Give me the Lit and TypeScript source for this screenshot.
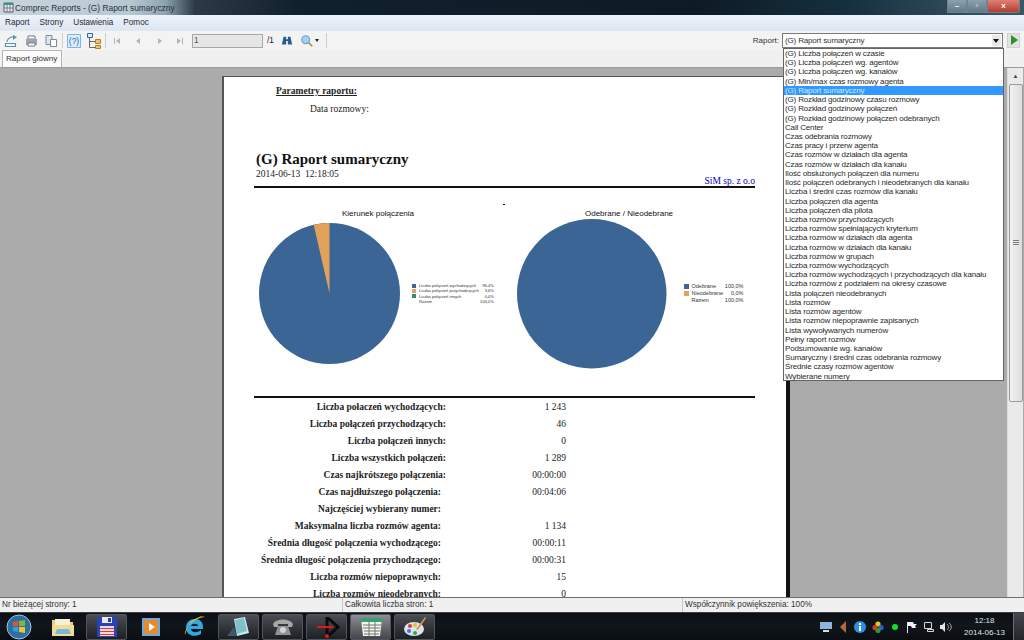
import { LitElement, html, css, svg } from 'lit';
import { customElement } from 'lit/decorators.js';

const reports = [
  '(G) Liczba połączeń w czasie',
  '(G) Liczba połączeń wg. agentów',
  '(G) Liczba połączeń wg. kanałów',
  '(G) Min/max czas rozmowy agenta',
  '(G) Raport sumaryczny',
  '(G) Rozkład godzinowy czasu rozmowy',
  '(G) Rozkład godzinowy połączeń',
  '(G) Rozkład godzinowy połączeń odebranych',
  'Call Center',
  'Czas odebrania rozmowy',
  'Czas pracy i przerw agenta',
  'Czas rozmów w działach dla agenta',
  'Czas rozmów w działach dla kanału',
  'Ilość obsłużonych połączeń dla numeru',
  'Ilość połączeń odebranych i nieodebranych dla kanału',
  'Liczba i średni czas rozmów dla kanału',
  'Liczba połączeń dla agenta',
  'Liczba połączeń dla pilota',
  'Liczba rozmów przychodzących',
  'Liczba rozmów spełniających kryterium',
  'Liczba rozmów w działach dla agenta',
  'Liczba rozmów w działach dla kanału',
  'Liczba rozmów w grupach',
  'Liczba rozmów wychodzących',
  'Liczba rozmów wychodzących i przychodzących dla kanału',
  'Liczba rozmów z podziałem na okresy czasowe',
  'Lista połączeń nieodebranych',
  'Lista rozmów',
  'Lista rozmów agentów',
  'Lista rozmów niepoprawnie zapisanych',
  'Lista wywoływanych numerów',
  'Pełny raport rozmów',
  'Podsumowanie wg. kanałów',
  'Sumaryczny i średni czas odebrania rozmowy',
  'Średnie czasy rozmów agentów',
  'Wybierane numery',
];

// [label, value, right edge offset of the label]
const stats: [string, string, number][] = [
  ['Liczba połaczeń wychodzących:', '1 243', 0],
  ['Liczba połączeń przychodzących:', '46', 0],
  ['Liczba połączeń innych:', '0', 0],
  ['Liczba wszystkich połączeń:', '1 289', 0],
  ['Czas najkrótszego połączenia:', '00:00:00', 0],
  ['Czas najdłuższego połączenia:', '00:04:06', 5],
  ['Najczęściej wybierany numer:', '', 5],
  ['Maksymalna liczba rozmów agenta:', '1 134', 5],
  ['Średnia długość połączenia wychodzącego:', '00:00:11', 5],
  ['Średnia długość połączenia przychodzącego:', '00:00:31', 5],
  ['Liczba rozmów niepoprawnych:', '15', 5],
  ['Liczba rozmów nieodebranych:', '0', 5],
];

const legendA: [string, string, string][] = [
  ['#3a6595', 'Liczba połączeń wychodzących', '96,4%'],
  ['#e3a25a', 'Liczba połączeń przychodzących', '3,6%'],
  ['#2f8f7f', 'Liczba połączeń innych', '0,0%'],
  ['', 'Razem', '100,0%'],
];

const legendB: [string, string, string][] = [
  ['#3a6595', 'Odebrane', '100,0%'],
  ['#e3a25a', 'Nieodebrane', '0,0%'],
  ['', 'Razem', '100,0%'],
];

const navIcon = (d: string) => html`<svg class="ico" width="16" height="16" viewBox="0 0 16 16">
  <path d=${d} fill="#b0b6bc"></path>
</svg>`;

const trayIcons = [
  svg`<path d="M0 1h12v7H0z" fill="#8fb4dc"></path><path d="M3 9h6v2H3z" fill="#d8dde2"></path>`,
  svg`<path d="M9 0v12L3 6z" fill="#b9653c"></path>`,
  svg`<circle cx="6" cy="6" r="6" fill="#2f8fe0"></circle><path d="M5 5h2v5H5zM5 2h2v2H5z" fill="#fff"></path>`,
  svg`<circle cx="6" cy="3" r="2.6" fill="#e8c820"></circle><circle cx="3" cy="6.5" r="2.6" fill="#d83a2a"></circle><circle cx="9" cy="6.5" r="2.6" fill="#2a62c8"></circle><circle cx="6" cy="9.5" r="2.6" fill="#2a9a3a"></circle>`,
  svg`<circle cx="6" cy="6" r="3" fill="#12e02a"></circle>`,
  svg`<path d="M1 1h1v11H1z" fill="#e8e8e8"></path><path d="M2 1h5l1 2h3l-2 2 1 2H6L5 5H2z" fill="#f2f2f2"></path>`,
  svg`<path d="M1.5 1.5h7v6h-7zM4.5 8.5h6v2h-6z" fill="none" stroke="#d6d6d6"></path>`,
  svg`<path d="M0 4h2l3-3v10L2 8H0z" fill="#e4e4e4"></path><path d="M7 3c2 2 2 4 0 6M9 2c3 2 3 6 0 8" fill="none" stroke="#a8a8a8"></path>`,
];

@customElement('app-root')
export class AppRoot extends LitElement {
  static styles = css`
    :host {
      display: block;
      position: relative;
      width: 1024px;
      height: 640px;
      overflow: hidden;
      font-family: 'Liberation Sans', Arial, sans-serif;
      font-size: 8.2px;
      color: #1a1a1a;
      background: #f0f0f0;
    }
    .shell {
      display: flex;
      flex-direction: column;
      height: 640px;
    }
    .title {
      height: 15px;
      flex: none;
      display: flex;
      align-items: center;
      gap: 1px;
      padding-left: 3px;
      box-sizing: border-box;
      font-size: 8.4px;
      color: #26323c;
      background: linear-gradient(90deg, #c9d4dc 0, #b8c8d3 130px, #8ea3b1 165px, #2b3a46 195px, #10202c 300px, #0d1b26 700px, #16303f 850px, #3a5564 1000px);
      position: relative;
    }
    .winbtns {
      position: absolute;
      right: 4px;
      top: 0;
      display: flex;
      height: 13px;
    }
    .winbtns div {
      height: 13px;
      box-sizing: border-box;
      border: 1px solid #6d8391;
      border-top: none;
      text-align: center;
      line-height: 11px;
      font-size: 8px;
      font-weight: bold;
      color: #fff;
    }
    .min, .max {
      width: 20px;
      background: linear-gradient(#8aa1ae, #61798a);
    }
    .close {
      width: 33px;
      background: linear-gradient(#dd8073, #b33f30);
      border-radius: 0 0 3px 0;
    }
    .menu {
      height: 15px;
      flex: none;
      display: flex;
      align-items: center;
      gap: 10px;
      padding-left: 5px;
      font-size: 8.2px;
      color: #2a2a2a;
      background: linear-gradient(#eef3fa, #dde6f2);
    }
    .toolbar {
      height: 20px;
      flex: none;
      display: flex;
      align-items: center;
      padding-left: 3px;
      box-sizing: border-box;
      background: #f3f3f3;
      border-top: 1px solid #e4e8ee;
    }
    .ico {
      display: block;
      flex: none;
    }
    .tb-gap {
      width: 4px;
      flex: none;
    }
    .tb-gap.wide {
      width: 7px;
    }
    .sep {
      width: 1px;
      height: 15px;
      background: #d0d0d0;
      margin: 0 3px;
      flex: none;
    }
    .sep.last {
      margin-left: 6px;
    }
    .nav {
      display: flex;
      gap: 5px;
      margin: 0 2px 0 0;
    }
    .pagebox {
      width: 71px;
      height: 14px;
      box-sizing: border-box;
      border: 1px solid #a8a8a8;
      background: #e6e6e6;
      padding-left: 1px;
      line-height: 12px;
      font-size: 8.2px;
      color: #555;
      flex: none;
      margin-left: 2px;
    }
    .of {
      margin: 0 7px 0 4px;
      color: #222;
    }
    .spacer {
      flex: 1;
    }
    .rep-label {
      margin-right: 3px;
      color: #333;
      font-size: 8px;
    }
    .combo {
      width: 221px;
      height: 15px;
      box-sizing: border-box;
      border: 1px solid #7a7a7a;
      background: #fff;
      padding-left: 2px;
      line-height: 13px;
      font-size: 8px;
      letter-spacing: -0.16px;
      color: #333;
      position: relative;
      flex: none;
    }
    .combo i {
      position: absolute;
      right: 1px;
      top: 1px;
      width: 9px;
      height: 11px;
      background: #e8e8e8;
    }
    .combo i::after {
      content: '';
      position: absolute;
      left: 1px;
      top: 4px;
      border: 3px solid transparent;
      border-top: 4px solid #111;
      border-bottom: none;
    }
    .go {
      width: 13px;
      height: 15px;
      margin: 0 4px 0 4px;
      box-sizing: border-box;
      border: 1px solid #cfcfcf;
      background: #e2e2e2;
      position: relative;
      flex: none;
    }
    .go::after {
      content: '';
      position: absolute;
      left: 3px;
      top: 1px;
      border: 5px solid transparent;
      border-left: 7px solid #2f8f2f;
      border-right: none;
    }
    .tabs {
      height: 18px;
      flex: none;
      box-sizing: border-box;
      background: #f0f0f0;
      border-bottom: 1px solid #9a9a9a;
      padding: 0 0 0 2px;
      display: flex;
    }
    .tab {
      height: 17px;
      box-sizing: border-box;
      padding: 0 4px 0 3px;
      line-height: 15px;
      font-size: 8px;
      border: 1px solid #b5b5b5;
      border-bottom: none;
      background: #fbfbfb;
      color: #333;
    }
    .viewer {
      flex: 1;
      min-height: 0;
      display: flex;
      background: #ababab;
      border-bottom: 1px solid #6f6f6f;
    }
    .scroller {
      flex: 1;
      overflow: hidden;
      padding: 8px 0 0 222px;
    }
    .scrollbar {
      width: 16px;
      margin-right: 1px;
      flex: none;
      background: #eaeaea;
      border-left: 1px solid #dcdcdc;
      box-sizing: border-box;
      display: flex;
      flex-direction: column;
      align-items: center;
      color: #444;
    }
    .up {
      height: 16px;
      width: 14px;
      font-size: 6px;
      line-height: 16px;
      text-align: center;
    }
    .thumb {
      width: 14px;
      height: 318px;
      box-sizing: border-box;
      border: 1px solid #9b9b9b;
      border-radius: 2px;
      background: linear-gradient(90deg, #f2f2f2, #dcdcdc);
      display: flex;
      align-items: center;
      justify-content: center;
    }
    .thumb b {
      display: block;
      width: 6px;
      height: 6px;
      background: repeating-linear-gradient(#777 0 1px, #eee 1px 2px);
    }
    .page {
      width: 568px;
      box-sizing: border-box;
      height: 700px;
      background: #fff;
      border-left: 2px solid #555;
      border-top: 1px solid #555;
      border-right: 4px solid #111;
      padding: 9px 31px 0 30px;
      font-family: 'Liberation Serif', 'Times New Roman', serif;
      color: #222;
    }
    .param-h {
      margin-left: 22px;
      font-size: 9.5px;
      font-weight: bold;
      text-decoration: underline;
      line-height: 11px;
    }
    .param-l {
      margin: 7px 0 0 56px;
      font-size: 9.5px;
      line-height: 11px;
    }
    h1 {
      margin: 35px 0 0 2px;
      font-size: 15px;
      line-height: 18px;
      font-weight: bold;
      color: #111;
    }
    .stamp {
      margin: 1px 0 0 2px;
      font-size: 9.5px;
      line-height: 10px;
    }
    .firm {
      text-align: right;
      font-size: 9.5px;
      line-height: 11px;
      margin-top: -3px;
      color: #0000c0;
    }
    .rule {
      height: 2px;
      background: #111;
    }
    .head-rule {
      margin-top: -1px;
    }
    .charts {
      display: flex;
      height: 208px;
      box-sizing: border-box;
      padding-top: 9px;
      position: relative;
    }
    .mark {
      position: absolute;
      left: 249px;
      top: 16px;
      width: 2px;
      height: 1px;
      background: #111;
    }
    .chart {
      flex: none;
    }
    .left {
      margin-left: 5px;
      width: 245px;
    }
    .right {
      margin-left: 13px;
      width: 240px;
    }
    .chart h4 {
      margin: 12px 0 0;
      font: 8px/9px 'Liberation Sans', Arial, sans-serif;
      text-align: center;
      color: #111;
    }
    .left h4 {
      width: 238px;
    }
    .right h4 {
      width: 224px;
    }
    .pie-row {
      display: flex;
      align-items: center;
    }
    .left .pie-row {
      margin-top: 5px;
      gap: 12px;
    }
    .right .pie-row {
      margin-top: 1px;
      gap: 17px;
    }
    .legend {
      font-family: 'Liberation Sans', Arial, sans-serif;
      color: #333;
    }
    .legend div {
      display: flex;
      align-items: center;
      white-space: nowrap;
    }
    .legend.small {
      font-size: 4.1px;
      line-height: 5.1px;
      width: 82px;
    }
    .legend.big {
      font-size: 5.5px;
      line-height: 7px;
      width: 60px;
    }
    .swatch {
      margin-right: 3px;
      flex: none;
    }
    .small .swatch {
      width: 4px;
      height: 4px;
    }
    .big .swatch {
      width: 5px;
      height: 5px;
    }
    .legend .n {
      flex: 1;
    }
    .stats {
      display: grid;
      grid-template-columns: 192px 120px;
      margin-top: 1px;
    }
    .stats span {
      height: 17px;
      line-height: 17px;
      font-size: 9.5px;
      white-space: nowrap;
      text-align: right;
    }
    .stats .k {
      font-weight: bold;
    }
    .status {
      height: 14px;
      flex: none;
      display: flex;
      font-size: 8.2px;
      line-height: 14px;
      color: #333;
      background: #f0f0f0;
    }
    .status div {
      padding-left: 2px;
      box-sizing: border-box;
    }
    .status div + div {
      border-left: 1px solid #c8c8c8;
    }
    .s1 {
      width: 342px;
    }
    .s2 {
      width: 340px;
    }
    .s3 {
      flex: 1;
    }
    .taskbar {
      height: 28px;
      flex: none;
      background: linear-gradient(#0c1015, #11161c 50%, #0a0d12);
      border-top: 1px solid #3a3f44;
      box-sizing: border-box;
      display: flex;
      align-items: center;
      color: #dfe4e8;
    }
    .task-icons {
      display: flex;
      align-items: center;
      height: 27px;
      gap: 3px;
      padding-left: 1px;
    }
    .tb {
      width: 41px;
      height: 26px;
      box-sizing: border-box;
      display: flex;
      align-items: center;
      justify-content: center;
      flex: none;
    }
    .tb.start {
      width: 36px;
    }
    .tb.folder {
      margin-left: 2px;
    }
    .tb.on {
      border: 1px solid #50565c;
      border-radius: 2px;
      background: linear-gradient(#4a4e52, #1c1f23);
    }
    .tb.cur {
      background: linear-gradient(#8b8f93, #42464a);
    }
    .tray {
      margin-left: auto;
      display: flex;
      align-items: center;
      height: 27px;
    }
    .slot {
      width: 17.2px;
      display: flex;
      justify-content: center;
    }
    .clock {
      margin: 0 8px 0 9px;
      width: 41px;
      text-align: center;
      white-space: nowrap;
      font: 8px/12px 'Liberation Sans', Arial, sans-serif;
    }
    .show-desktop {
      width: 11px;
      height: 27px;
      box-sizing: border-box;
      border-left: 1px solid #6a6e72;
      background: linear-gradient(#44484c, #22262a);
    }
    .list {
      position: absolute;
      left: 783px;
      top: 48px;
      width: 221px;
      height: 333px;
      box-sizing: border-box;
      background: #fff;
      border: 1px solid #646464;
      font-size: 8px;
      letter-spacing: -0.16px;
      color: #2a2a2a;
    }
    .list div {
      height: 9.23px;
      line-height: 9.23px;
      padding-left: 1px;
      white-space: nowrap;
    }
    .list .sel {
      background: #3399ff;
      color: #cfe6ff;
    }
  `;

  private pie(r: number, slice: boolean) {
    const d = r * 2;
    // 3.6% wedge that ends at twelve o'clock
    const a = (3.6 / 100) * 2 * Math.PI;
    const x = r - r * Math.sin(a);
    const y = r - r * Math.cos(a);
    return html`<svg class="ico" width=${d} height=${d} viewBox="0 0 ${d} ${d}">
      <circle cx=${r} cy=${r} r=${r} fill="#3a6595"></circle>
      ${slice
        ? svg`<path d="M${r} ${r} L${x} ${y} A${r} ${r} 0 0 1 ${r} 0 Z" fill="#e3a25a"></path>`
        : ''}
    </svg>`;
  }

  private legend(rows: [string, string, string][], size: string) {
    return html`<div class="legend ${size}">
      ${rows.map(
        ([c, n, v]) => html`<div>
          <span class="swatch" style="background:${c || 'transparent'}"></span>
          <span class="n">${n}</span><span>${v}</span>
        </div>`
      )}
    </div>`;
  }

  private taskbar() {
    return html`<div class="taskbar">
      <div class="task-icons">
        <div class="tb start">
          <svg width="26" height="26" viewBox="0 0 26 26">
            <circle cx="13" cy="13" r="12" fill="#2d6f9e"></circle>
            <circle cx="13" cy="13" r="12" fill="none" stroke="#9cc4dc" stroke-width="1"></circle>
            <path d="M7 8l5-1v5H7z" fill="#e2562f"></path>
            <path d="M13 7l6-1v6h-6z" fill="#7fb83c"></path>
            <path d="M7 13h5v5l-5-1z" fill="#3d9be0"></path>
            <path d="M13 13h6v6l-6-1z" fill="#f2c12e"></path>
          </svg>
        </div>
        <div class="tb folder">
          <svg width="24" height="22" viewBox="0 0 24 22">
            <path d="M1 4h8l2 2h11v14H1z" fill="#e8cf7f"></path>
            <path d="M4 3h15v6H4z" fill="#f6f0d8"></path>
            <path d="M1 9h22v11H1z" fill="#f1dc93"></path>
            <path d="M6 13h12l2 5H4z" fill="#7cb8dc"></path>
          </svg>
        </div>
        <div class="tb on">
          <svg width="22" height="22" viewBox="0 0 22 22">
            <path d="M1 1h20v20H1z" fill="#2743b5"></path>
            <path d="M6 1h10v6H6z" fill="#e8e8f0"></path>
            <path d="M12 2h3v4h-3z" fill="#2743b5"></path>
            <path d="M4 10h14v10H4z" fill="#f1d7d7"></path>
            <path d="M4 12h14v1H4zM4 15h14v1H4zM4 18h14v1H4z" fill="#c8404c"></path>
          </svg>
        </div>
        <div class="tb">
          <svg width="20" height="20" viewBox="0 0 20 20">
            <path d="M1 1h18v18H1z" fill="#6ea8d8"></path>
            <path d="M3 3h14v14H3z" fill="#e58a2e"></path>
            <path d="M8 6l6 4-6 4z" fill="#fff"></path>
          </svg>
        </div>
        <div class="tb">
          <svg width="24" height="24" viewBox="0 0 24 24">
            <path d="M3 13c0-6 4-9 9-9s8 3 8 8v2H8c0 3 5 5 10 1v4c-7 4-15 1-15-6zm5-2h7c0-3-6-3-7 0z" fill="#31a8e0"></path>
            <path d="M2 20C1 14 10 3 22 2c-5-1-5 0-8 1C7 6 5 10 2 20z" fill="#f0c030"></path>
          </svg>
        </div>
        <div class="tb on">
          <svg width="26" height="22" viewBox="0 0 26 22">
            <path d="M8 3l11-2 4 16-12 3z" fill="#cfe8e8"></path>
            <path d="M9 4l9-2 3 13-10 3z" fill="#7fc0cc"></path>
            <path d="M1 20l7-9 3 9z" fill="#3d5a66"></path>
          </svg>
        </div>
        <div class="tb on">
          <svg width="24" height="20" viewBox="0 0 24 20">
            <path d="M2 7c3-6 17-6 20 0l-1 3h-4V7H7v3H3z" fill="#a4a8a8"></path>
            <path d="M7 9h10l3 9H4z" fill="#8e9292"></path>
            <circle cx="12" cy="13" r="3" fill="#d2d4d4"></circle>
          </svg>
        </div>
        <div class="tb on">
          <svg width="26" height="22" viewBox="0 0 26 22">
            <path d="M13 1v20M14 2l10 9-10 9" fill="none" stroke="#0a0a0a" stroke-width="3"></path>
            <path d="M3 11h16" stroke="#e01818" stroke-width="2"></path>
            <circle cx="13" cy="20" r="2" fill="#e01818"></circle>
          </svg>
        </div>
        <div class="tb on cur">
          <svg width="26" height="22" viewBox="0 0 26 22">
            <path d="M3 2h21l-2 18H5z" fill="#f4f4ea"></path>
            <path d="M3 2h21v4H3z" fill="#37a07a"></path>
            <path d="M5 9h18M5 12h17M6 15h16M6 18h15M11 6v14M17 6v14" stroke="#777" stroke-width="1"></path>
          </svg>
        </div>
        <div class="tb on">
          <svg width="24" height="22" viewBox="0 0 24 22">
            <ellipse cx="11" cy="13" rx="10" ry="7" fill="#dfe2ea"></ellipse>
            <circle cx="7" cy="10" r="2" fill="#d0403c"></circle>
            <circle cx="12" cy="9" r="2" fill="#e8c030"></circle>
            <circle cx="6" cy="15" r="2" fill="#3a78d0"></circle>
            <circle cx="12" cy="17" r="2" fill="#3aa050"></circle>
            <path d="M13 13L22 1l1 1-8 12z" fill="#d09a50"></path>
          </svg>
        </div>
      </div>
      <div class="tray">
        ${trayIcons.map(
          (i) => html`<div class="slot"><svg class="ico" width="12" height="12" viewBox="0 0 12 12">${i}</svg></div>`
        )}
        <div class="clock">12:18<br />2014-06-13</div>
        <div class="show-desktop"></div>
      </div>
    </div>`;
  }

  render() {
    return html`
      <div class="shell">
        <div class="title">
          <svg class="ico" width="11" height="11" viewBox="0 0 11 11">
            <path d="M1 1h9v9H1z" fill="#eef2ee" stroke="#557"></path>
            <path d="M1 1h9v2H1z" fill="#3a9a7a"></path>
            <path d="M4 3v7M7 3v7M1 6h9" stroke="#778"></path>
          </svg>
          <span>Comprec Reports - (G) Raport sumaryczny</span>
          <div class="winbtns">
            <div class="min">–</div>
            <div class="max">▫</div>
            <div class="close">x</div>
          </div>
        </div>
        <div class="menu"><span>Raport</span><span>Strony</span><span>Ustawienia</span><span>Pomoc</span></div>
        <div class="toolbar">
          <svg class="ico" width="16" height="16" viewBox="0 0 16 16">
            <path d="M2.5 13.5h10v-3h-10zM4 9c0-3 3-5 6-5" fill="none" stroke="#5a90b4" stroke-width="1.1"></path>
            <path d="M10 2l4 2-4 3z" fill="#5a90b4"></path>
          </svg>
          <div class="tb-gap"></div>
          <svg class="ico" width="16" height="16" viewBox="0 0 16 16">
            <path d="M5 3h7v3H5z" fill="#fff" stroke="#778"></path>
            <path d="M3 6h11v6H3z" fill="#9aa6b4"></path>
            <path d="M5 10h7v3H5z" fill="#fff" stroke="#778"></path>
          </svg>
          <div class="tb-gap"></div>
          <svg class="ico" width="16" height="16" viewBox="0 0 16 16">
            <path d="M3 2.5h6v9H3z" fill="#dfe5ec" stroke="#7a8a9a"></path>
            <path d="M7.5 6.5h6v7h-6z" fill="#fff" stroke="#7a8a9a"></path>
          </svg>
          <div class="sep"></div>
          <svg class="ico" width="16" height="16" viewBox="0 0 16 16">
            <path d="M1.5 1.5h13v13h-13z" fill="#dcecfb" stroke="#7eb4e2"></path>
            <text x="8" y="11" text-anchor="middle" font-size="8.5" font-family="Liberation Sans" fill="#2c6fb0">(?)</text>
          </svg>
          <div class="tb-gap"></div>
          <svg class="ico" width="16" height="18" viewBox="0 0 16 18">
            <path d="M1.5 1.5h5v4h-5z" fill="#dbe8f6" stroke="#34689c"></path>
            <path d="M9.5 7.5h5v4h-5zM9.5 13.5h5v3h-5z" fill="#f0c070" stroke="#b97f28"></path>
            <path d="M3.5 5.5v10h6M3.5 9.5h6" fill="none" stroke="#666"></path>
          </svg>
          <div class="sep"></div>
          <div class="nav">
            ${navIcon('M5 5h1v6H5zM11 5v6L7 8z')}
            ${navIcon('M10 5v6L6 8z')}
            ${navIcon('M7 5v6l4-3z')}
            ${navIcon('M10 5h1v6h-1zM5 5v6l4-3z')}
          </div>
          <div class="pagebox">1</div>
          <span class="of">/1</span>
          <svg class="ico" width="12" height="12" viewBox="0 0 14 14">
            <path d="M3 2h3v3h2V2h3l2 9H8V7H6v4H1z" fill="#2a5c8e"></path>
          </svg>
          <div class="tb-gap wide"></div>
          <svg class="ico" width="14" height="14" viewBox="0 0 16 16">
            <circle cx="6.5" cy="6.5" r="4.5" fill="#a8d0ee" stroke="#6aa4d0" stroke-width="1.4"></circle>
            <path d="M10 10l4 4" stroke="#b98a3a" stroke-width="2"></path>
          </svg>
          <svg class="ico" width="6" height="6" viewBox="0 0 6 6"><path d="M1 1h4L3 4z" fill="#222"></path></svg>
          <div class="sep last"></div>
          <div class="spacer"></div>
          <span class="rep-label">Raport:</span>
          <div class="combo">(G) Raport sumaryczny<i></i></div>
          <div class="go"></div>
        </div>
        <div class="tabs"><div class="tab">Raport główny</div></div>
        <div class="viewer">
          <div class="scroller">
            <div class="page">
              <div class="param-h">Parametry raportu:</div>
              <div class="param-l">Data rozmowy:</div>
              <h1>(G) Raport sumaryczny</h1>
              <div class="stamp">2014-06-13&nbsp; 12:18:05</div>
              <div class="firm">SiM sp. z o.o</div>
              <div class="rule head-rule"></div>
              <div class="charts">
                <span class="mark"></span>
                <div class="chart left">
                  <h4>Kierunek połączenia</h4>
                  <div class="pie-row">
                    ${this.pie(70.5, true)}
                    ${this.legend(legendA, 'small')}
                  </div>
                </div>
                <div class="chart right">
                  <h4>Odebrane / Nieodebrane</h4>
                  <div class="pie-row">
                    ${this.pie(74.75, false)}
                    ${this.legend(legendB, 'big')}
                  </div>
                </div>
              </div>
              <div class="rule"></div>
              <div class="stats">
                ${stats.map(
                  ([k, v, off]) => html`<span class="k" style="padding-right:${off}px">${k}</span><span>${v}</span>`
                )}
              </div>
            </div>
          </div>
          <div class="scrollbar">
            <div class="up">▲</div>
            <div class="thumb"><b></b></div>
          </div>
        </div>
        <div class="status">
          <div class="s1">Nr bieżącej strony: 1</div>
          <div class="s2">Całkowita liczba stron: 1</div>
          <div class="s3">Współczynnik powiększenia: 100%</div>
        </div>
        ${this.taskbar()}
      </div>
      <div class="list">
        ${reports.map(
          (r, i) => html`<div class=${i === 4 ? 'sel' : ''}>${r}</div>`
        )}
      </div>
    `;
  }
}
